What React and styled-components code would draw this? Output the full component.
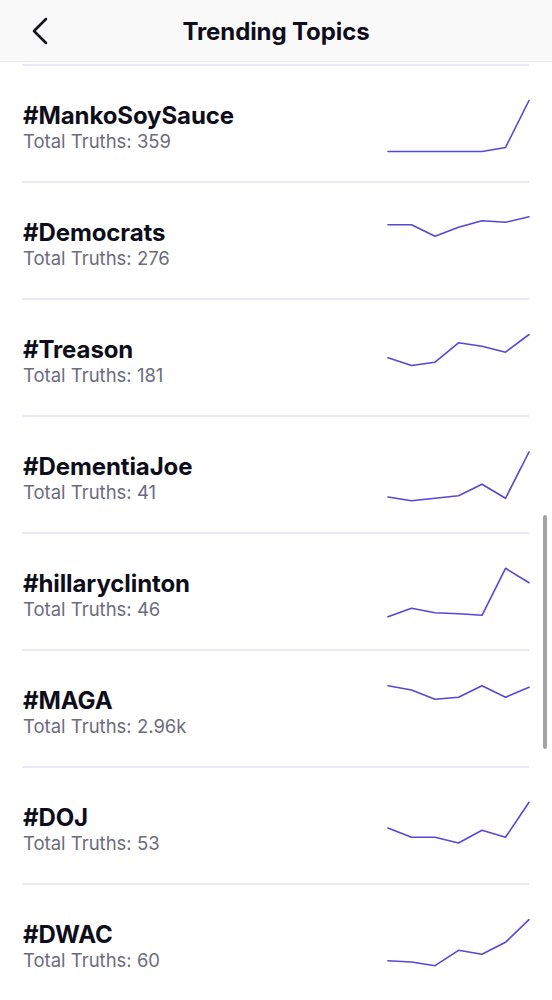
import React from "react";
import styled, { createGlobalStyle } from "styled-components";

const GlobalStyle = createGlobalStyle`
  html, body {
    margin: 0;
    padding: 0;
    background: #ffffff;
    font-family: Inter, "Noto Sans", "Liberation Sans", sans-serif;
    -webkit-font-smoothing: antialiased;
  }
`;

const Screen = styled.div`
  width: 552px;
  height: 1000px;
  overflow: hidden;
  position: relative;
  background: #fff;
`;

const Header = styled.header`
  box-sizing: border-box;
  height: 62px;
  background: #f9f9f9;
  border-bottom: 1px solid #ececec;
  display: flex;
  align-items: center;
  justify-content: center;
  position: relative;
`;

const BackButton = styled.button`
  position: absolute;
  left: 28px;
  top: 14px;
  width: 24px;
  height: 34px;
  padding: 0;
  border: 0;
  background: none;
  display: flex;
  align-items: center;
  justify-content: center;
`;

const Title = styled.h1`
  margin: 2px 0 0;
  font-size: 24px;
  line-height: 28px;
  font-weight: 700;
  color: #0e0e1a;
  letter-spacing: -0.1px;
`;

const List = styled.div`
  padding: 2px 23px 0 22px;
`;

const Divider = styled.div`
  height: 2px;
  background: #e9e8f8;
`;

const Row = styled.div`
  box-sizing: border-box;
  height: 117px;
  display: flex;
  justify-content: space-between;
  align-items: flex-start;
  border-bottom: 2px solid #e9e8f8;
`;

const TextBlock = styled.div`
  margin-top: 36px;
  padding-left: 1px;
`;

const Tag = styled.div`
  font-size: 24px;
  line-height: 28px;
  font-weight: 700;
  color: #0e0e1a;
  letter-spacing: -0.1px;
`;

const Count = styled.div`
  font-size: 18.5px;
  line-height: 22px;
  color: #6c6c7d;
`;

const Chart = styled.svg`
  margin-top: 30px;
  overflow: visible;
  flex-shrink: 0;
`;

const ScrollThumb = styled.div`
  position: absolute;
  left: 543px;
  top: 515px;
  width: 4px;
  height: 234px;
  border-radius: 2px;
  background: #a4a4a4;
`;

const topics = [
  { tag: "#MankoSoySauce", total: "359", points: [85.5, 85.5, 85.5, 85.5, 85.5, 81.5, 34.5] },
  { tag: "#Democrats", total: "276", points: [41.7, 41.7, 53.3, 44.3, 37.7, 39.3, 33.7] },
  { tag: "#Treason", total: "181", points: [57.8, 65.5, 62.2, 42.8, 46.2, 52.2, 34.5] },
  { tag: "#DementiaJoe", total: "41", points: [80, 83.7, 81.3, 78.7, 67.3, 81.3, 35] },
  { tag: "#hillaryclinton", total: "46", points: [82.7, 74.3, 78.7, 79.7, 81.3, 34.3, 48.7] },
  { tag: "#MAGA", total: "2.96k", points: [34.7, 39, 48.3, 46.3, 34.7, 46.3, 36.3] },
  { tag: "#DOJ", total: "53", points: [60, 69.3, 69.3, 75, 62.3, 69.3, 34.3] },
  { tag: "#DWAC", total: "60", points: [75.7, 77, 80.7, 65.3, 69.3, 57.3, 34.7] },
];

const Sparkline = ({ points }) => {
  const d = points
    .map((y, i) => `${(1 + i * 23.5).toFixed(1)},${(y - 30).toFixed(1)}`)
    .join(" ");
  return (
    <Chart width="142" height="60" viewBox="0 0 142 60">
      <polyline
        points={d}
        fill="none"
        stroke="#5548d6"
        strokeWidth="1.6"
        strokeLinejoin="round"
        strokeLinecap="round"
      />
    </Chart>
  );
};

const App = () => {
  return (
    <Screen>
      <GlobalStyle />
      <Header>
        <BackButton aria-label="Back">
          <svg width="16" height="28" viewBox="0 0 16 28">
            <polyline
              points="14,2 2,14 14,26"
              fill="none"
              stroke="#111118"
              strokeWidth="2.6"
              strokeLinecap="round"
              strokeLinejoin="round"
            />
          </svg>
        </BackButton>
        <Title>Trending Topics</Title>
      </Header>
      <List>
        <Divider />
        {topics.map((t) => (
          <Row key={t.tag}>
            <TextBlock>
              <Tag>{t.tag}</Tag>
              <Count>Total Truths: {t.total}</Count>
            </TextBlock>
            <Sparkline points={t.points} />
          </Row>
        ))}
      </List>
      <ScrollThumb />
    </Screen>
  );
};

export default App;
